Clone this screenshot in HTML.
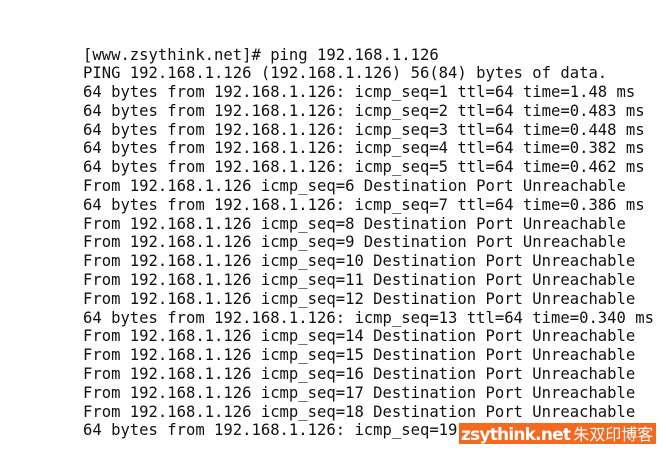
<!DOCTYPE html>
<html><head><meta charset="utf-8"><style>
html,body{margin:0;padding:0;background:#fff;width:666px;height:458px;overflow:hidden;position:relative}
pre{position:absolute;left:83px;top:45.5px;margin:0;font-family:"DejaVu Sans Mono",monospace;font-size:15.55px;line-height:18.8px;color:#111}
.wm{position:absolute;left:459px;top:423px;width:197px;height:21px;background:#f26a22;color:#fff;font-family:"DejaVu Sans","Noto Sans CJK SC",sans-serif;font-weight:bold;font-size:17px;line-height:21px;white-space:nowrap;padding-left:2px;box-sizing:border-box;letter-spacing:-0.8px;overflow:hidden}
.wm span{font-family:"Noto Sans CJK SC",sans-serif;font-size:16px;font-weight:normal;letter-spacing:0;margin-left:3px}
</style></head><body>
<pre>[www.zsythink.net]# ping 192.168.1.126
PING 192.168.1.126 (192.168.1.126) 56(84) bytes of data.
64 bytes from 192.168.1.126: icmp_seq=1 ttl=64 time=1.48 ms
64 bytes from 192.168.1.126: icmp_seq=2 ttl=64 time=0.483 ms
64 bytes from 192.168.1.126: icmp_seq=3 ttl=64 time=0.448 ms
64 bytes from 192.168.1.126: icmp_seq=4 ttl=64 time=0.382 ms
64 bytes from 192.168.1.126: icmp_seq=5 ttl=64 time=0.462 ms
From 192.168.1.126 icmp_seq=6 Destination Port Unreachable
64 bytes from 192.168.1.126: icmp_seq=7 ttl=64 time=0.386 ms
From 192.168.1.126 icmp_seq=8 Destination Port Unreachable
From 192.168.1.126 icmp_seq=9 Destination Port Unreachable
From 192.168.1.126 icmp_seq=10 Destination Port Unreachable
From 192.168.1.126 icmp_seq=11 Destination Port Unreachable
From 192.168.1.126 icmp_seq=12 Destination Port Unreachable
64 bytes from 192.168.1.126: icmp_seq=13 ttl=64 time=0.340 ms
From 192.168.1.126 icmp_seq=14 Destination Port Unreachable
From 192.168.1.126 icmp_seq=15 Destination Port Unreachable
From 192.168.1.126 icmp_seq=16 Destination Port Unreachable
From 192.168.1.126 icmp_seq=17 Destination Port Unreachable
From 192.168.1.126 icmp_seq=18 Destination Port Unreachable
64 bytes from 192.168.1.126: icmp_seq=19</pre>
<div class="wm">zsythink.net<span>朱双印博客</span></div>
</body></html>
